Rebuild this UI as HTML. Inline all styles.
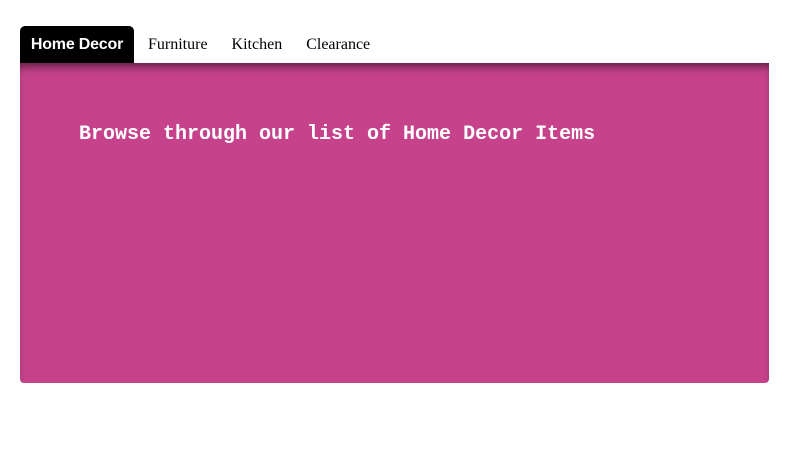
<!DOCTYPE html>
<html><head><style>
html,body{margin:0;padding:0;background:#fff;width:802px;height:451px;overflow:hidden}
.tabs{position:absolute;left:20px;top:26px;height:37px;display:flex}
.tab{height:37px;line-height:38px;font-family:"Liberation Serif",serif;font-size:16px;color:#000;padding:0 12px;white-space:nowrap}
.tab.active{background:#000;color:#fff;font-family:"Liberation Sans",sans-serif;font-weight:bold;font-size:16px;border-radius:5px 5px 0 0;padding:0;width:114px;text-align:center;letter-spacing:-0.2px}
.panel{position:absolute;left:20px;top:63px;width:749px;height:320px;background:#c6438c;border-radius:0 0 4px 4px;box-shadow:inset 0 8px 10px -5px rgba(0,0,0,0.6)}
.panel h1{position:absolute;left:59px;top:60px;margin:0;font-family:"Liberation Mono",monospace;font-weight:bold;font-size:20px;color:#fff;white-space:nowrap}
</style></head><body>
<div class="tabs">
<div class="tab active">Home Decor</div>
<div class="tab" style="padding-left:14px">Furniture</div>
<div class="tab">Kitchen</div>
<div class="tab">Clearance</div>
</div>
<div class="panel"><h1>Browse through our list of Home Decor Items</h1></div>
</body></html>
